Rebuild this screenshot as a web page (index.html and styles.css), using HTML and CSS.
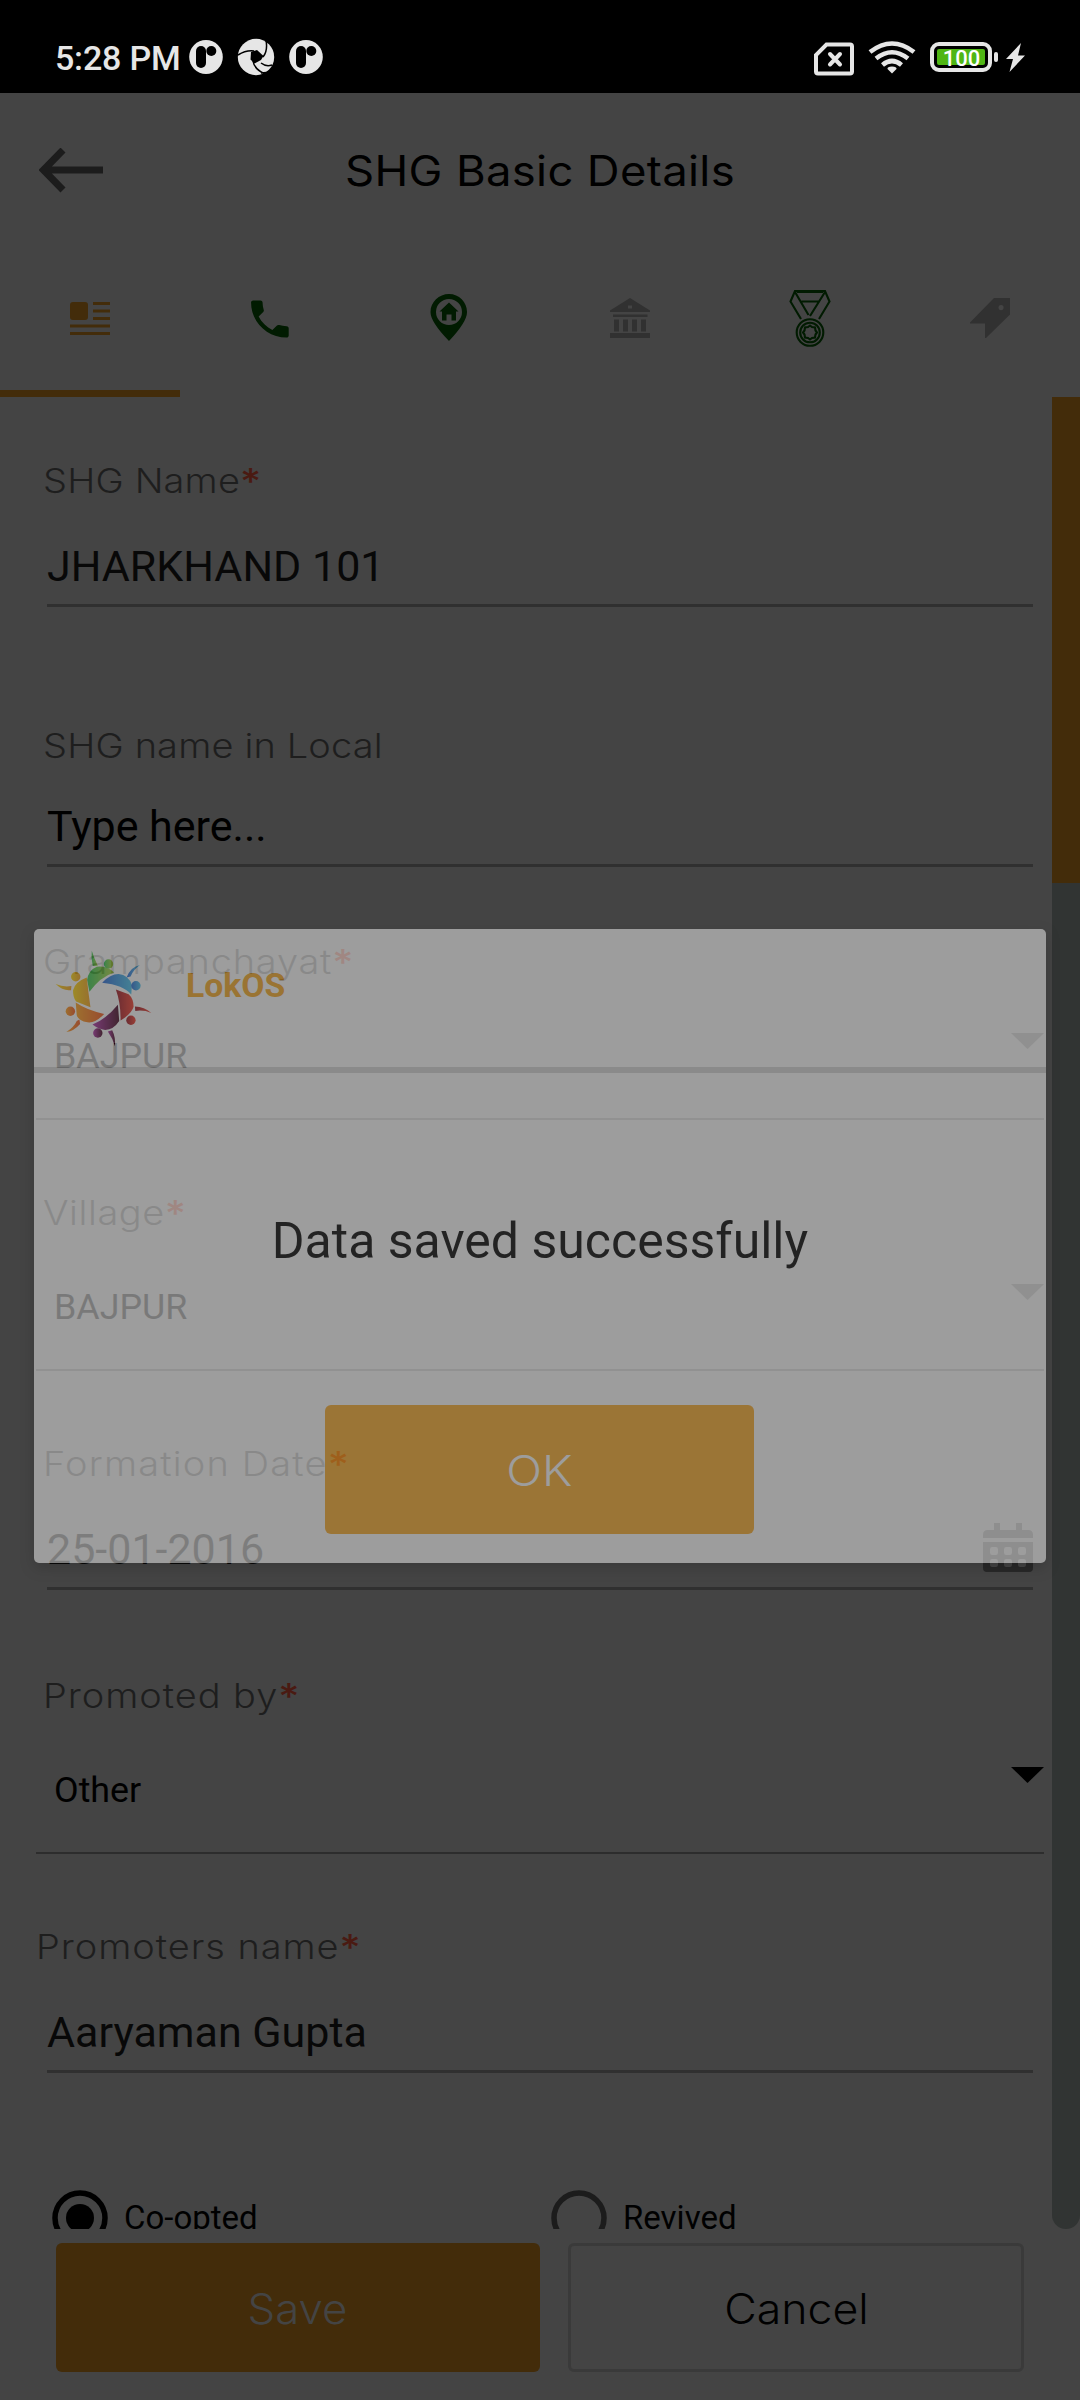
FILE: index.html
```html
<!DOCTYPE html>
<html lang="en">
<head>
<meta charset="utf-8">
<title>SHG Basic Details</title>
<link rel="stylesheet" href="styles.css">
</head>
<body>
<div class="phone">
  <div class="status">
    <span class="time">5:28 PM</span>
    <svg class="notes" width="136" height="40" viewBox="0 0 136 40">
      <g fill="#e6e6e6"><ellipse cx="17" cy="20" rx="16.8" ry="17"/><circle cx="67" cy="20" r="18.2"/><ellipse cx="117" cy="20" rx="16.8" ry="17"/></g>
      <g fill="#000"><rect x="7" y="9" width="10" height="22" rx="5"/><circle cx="22.300" cy="14" r="5"/><rect x="107" y="9" width="10" height="22" rx="5"/><circle cx="122.300" cy="14" r="5"/><path d="M62 15l6-2 6.500 6-2.500 4-6.500 3.500-4-4z"/></g>
      <g fill="none" stroke="#000" stroke-width="1.500"><path d="M49 18q8-5 16-4M77 3q2 11-3 17M83 28q-6 2-11-2M64 24q1 8 12 13M72 36q6 0 10-2"/></g>
    </svg>
    <svg class="system" width="214" height="40" viewBox="0 0 214 40">
      <path d="M12.500 7.500H36q2 0 2 2v25q0 2-2 2H4q-2 0-2-2V18z" fill="none" stroke="#e6e6e6" stroke-width="4"/>
      <path d="M16 17l10 10.500M26 17L16 27.500" stroke="#e6e6e6" stroke-width="4" stroke-linecap="round"/>
      <g fill="none" stroke="#e6e6e6" stroke-width="4.600"><path d="M56 15Q78 -2 100 15"/><path d="M62 21.500Q78 9 94 21.500"/><path d="M68.500 28Q78 20 87.500 28"/></g>
      <path d="M78 29.500q5 0 4.500 2.500L78 36.500 73.500 32q-.5-2.500 4.500-2.500z" fill="#e6e6e6"/>
      <rect x="118" y="7" width="58" height="26" rx="7" fill="none" stroke="#e6e6e6" stroke-width="4"/>
      <rect x="123" y="12" width="48" height="16" rx="2" fill="#4fb614"/>
      <rect x="180" y="15" width="4" height="10" rx="2" fill="#e6e6e6"/>
      <text x="147.500" y="29" class="charge">100</text>
      <path d="M207 6L192 22h7l-3.500 13L211 18.500h-7z" fill="#e6e6e6"/>
    </svg>
  </div>

  <header class="header">
    <svg class="back" width="66" height="46" viewBox="0 0 66 46"><path d="M64 22H6M24 2L4.500 22 24 42" fill="none" stroke="#1c1c1c" stroke-width="7"/></svg>
    <h1 class="title">SHG Basic Details</h1>
  </header>

  <nav class="tabs">
    <div class="tab tab-active"><svg class="icon" viewBox="0 0 60 60" fill="#432c0a"><rect x="10" y="14" width="18" height="18" rx="3"/><path d="M33 14h17v3H33zM33 21.500h17v3H33zM33 29h17v3H33zM10 36.500h40v3H10zM10 44h40v3H10z"/></svg></div>
    <div class="tab"><svg class="icon" viewBox="0 0 60 60" fill="#011b01"><path transform="translate(4.800 6.300) scale(2.090 2.060)" d="M6.620 10.790c1.440 2.830 3.760 5.140 6.590 6.590l2.200-2.200c.27-.27.67-.36 1.020-.24 1.120.37 2.330.57 3.570.57.55 0 1 .45 1 1V20c0 .55-.45 1-1 1-9.390 0-17-7.610-17-17 0-.55.45-1 1-1h3.500c.55 0 1 .45 1 1 0 1.250.2 2.450.57 3.570.11.35.03.74-.25 1.020l-2.200 2.200z"/></svg></div>
    <div class="tab"><svg class="icon" viewBox="0 0 60 60"><path fill="#011b01" fill-rule="evenodd" d="M29 6C39 6 47 14 47 24Q47 34 29 53Q10.500 34 10.500 24C10.500 14 19 6 29 6zM29 11A13 13 0 1 0 29 37A13 13 0 1 0 29 11z"/><path fill="#011b01" d="M29 14.500l9.500 9H36v9h-4.500v-6h-5v6H22v-9h-2.500z"/></svg></div>
    <div class="tab"><svg class="icon" viewBox="0 0 60 60" fill="#313131"><path fill-rule="evenodd" d="M30 10l20 12.500V24H10v-1.500zM28 17.500v3h4v-3zM13 26.500h34.500v2.500H13zM14 31.500h5v12h-5zM23 31.500h5v12h-5zM32 31.500h5v12h-5zM41 31.500h5v12h-5zM10 45h40v5H10z"/></svg></div>
    <div class="tab"><svg class="icon" viewBox="0 0 60 60" fill="none" stroke="#011b01" stroke-width="2.100"><path d="M21 31L10.500 13.500 15 3h30l4.500 10.500L39 31M15 4l13.500 23M45 4L30 28M21.500 13.500h17M17 4h26"/><circle cx="30" cy="44.500" r="13.300"/><circle cx="30" cy="44.500" r="9.800"/><path d="M30 37.500l2 1.500 3 .5.500 3 1.500 2-1.500 2-.5 3-3 .5-2 1.500-2-1.500-3-.5-.5-3-1.500-2 1.500-2 .5-3 3-.5z"/></svg></div>
    <div class="tab"><svg class="icon" viewBox="0 0 60 60" fill="#313131"><path fill-rule="evenodd" d="M34 10h16v16.500L26 50h-1V35.500H10V34.500zM41 17a2.600 2.600 0 1 0 .1 0z"/></svg></div>
  </nav>

  <main class="body">
    <form class="form">
      <div class="field first">
        <label class="label"><span class="w1">SHG Name</span><b class="star">*</b></label>
        <div class="input">JHARKHAND 101</div>
      </div>
      <div class="field second">
        <label class="label"><span class="w2">SHG name in Local</span></label>
        <div class="input hint">Type here...</div>
      </div>
      <div class="field third">
        <label class="label"><span class="w3">Grampanchayat</span><b class="star">*</b></label>
        <div class="select disabled"><span>BAJPUR</span><i class="caret"></i></div>
      </div>
      <div class="field">
        <label class="label"><span class="w4">Village</span><b class="star">*</b></label>
        <div class="select disabled"><span>BAJPUR</span><i class="caret"></i></div>
      </div>
      <div class="field">
        <label class="label"><span class="w5">Formation Date</span><b class="star">*</b></label>
        <div class="input date"><span>25-01-2016</span>
          <svg class="calendar" width="50" height="50" viewBox="0 0 50 50" fill="#282828"><path fill-rule="evenodd" d="M11 0h6v7h16V0h6v7h6q5 0 5 5v3H0v-3q0-5 5-5h6zM0 19h50v26q0 4-4 4H4q-4 0-4-4zM9 24q-2 0-2 2v4q0 2 2 2h4q2 0 2-2v-4q0-2-2-2zM23 24q-2 0-2 2v4q0 2 2 2h4q2 0 2-2v-4q0-2-2-2zM37 24q-2 0-2 2v4q0 2 2 2h4q2 0 2-2v-4q0-2-2-2zM9 36q-2 0-2 2v4q0 2 2 2h4q2 0 2-2v-4q0-2-2-2zM23 36q-2 0-2 2v4q0 2 2 2h4q2 0 2-2v-4q0-2-2-2zM37 36q-2 0-2 2v4q0 2 2 2h4q2 0 2-2v-4q0-2-2-2z"/></svg>
        </div>
      </div>
      <div class="field sixth">
        <label class="label"><span class="w6">Promoted by</span><b class="star">*</b></label>
        <div class="select"><span>Other</span><i class="caret"></i></div>
      </div>
      <div class="field">
        <label class="label outdent"><span class="w7">Promoters name</span><b class="star">*</b></label>
        <div class="input">Aaryaman Gupta</div>
      </div>
      <div class="radios">
        <div class="radio"><svg width="56" height="56" viewBox="0 0 56 56"><circle cx="28" cy="28" r="25" fill="none" stroke="#000" stroke-width="5.500"/><circle cx="28" cy="28" r="14" fill="#000"/></svg><span>Co-opted</span></div>
        <div class="radio"><svg width="56" height="56" viewBox="0 0 56 56"><circle cx="28" cy="28" r="25" fill="none" stroke="#1c1c1c" stroke-width="5.500"/></svg><span>Revived</span></div>
      </div>
    </form>
    <div class="track"><div class="thumb"></div></div>
  </main>

  <footer class="actions">
    <div class="button save"><span>Save</span></div>
    <div class="button cancel"><span>Cancel</span></div>
  </footer>

  <section class="dialog">
    <div class="dialog-head">
      <svg class="logo" width="97" height="97" viewBox="165 150 290 290">
        <defs>
          <linearGradient id="g"><stop offset="0" stop-color="#30c850"/><stop offset="1" stop-color="#b0d840"/></linearGradient>
          <linearGradient id="b"><stop offset="0" stop-color="#2868d8"/><stop offset="1" stop-color="#45c4ee"/></linearGradient>
          <linearGradient id="r"><stop offset="0" stop-color="#981420"/><stop offset="1" stop-color="#f83a28"/></linearGradient>
          <linearGradient id="p"><stop offset="0" stop-color="#b030a8"/><stop offset="1" stop-color="#40041c"/></linearGradient>
          <linearGradient id="o"><stop offset="0" stop-color="#ffa018"/><stop offset="1" stop-color="#f65418"/></linearGradient>
          <linearGradient id="y"><stop offset="0" stop-color="#ffd808"/><stop offset="1" stop-color="#f4a018"/></linearGradient>
        </defs>
        <g fill="url(#g)"><path d="M268 275L261 240Q265 210 290 200Q318 196 342 217Q300 230 268 275z"/><path d="M275 152Q282 175 293 197L278 198Q272 175 275 152z"/><circle cx="325" cy="192" r="14"/></g>
        <g fill="url(#b)"><path d="M306 248Q330 222 355 222Q385 225 395 255L393 283Q370 255 306 248z"/><path d="M419 195Q392 200 379 232L391 229Q400 208 419 195z"/><circle cx="407" cy="257" r="14"/></g>
        <g fill="url(#r)"><path d="M347 268L385 282Q400 295 400 320Q395 340 361 361Q362 310 347 268z"/><path d="M404 319L405 332Q430 328 453 338Q432 320 404 319z"/><circle cx="392" cy="360" r="14"/></g>
        <g fill="url(#p)"><path d="M353 314L357 362Q340 388 315 389Q295 387 277 373Q320 355 353 314z"/><path d="M323 394L336 390Q347 412 344 438Q338 415 323 394z"/><circle cx="293" cy="398" r="14"/></g>
        <g fill="url(#o)"><path d="M227 307Q260 330 312 341Q285 370 262 366Q235 362 230 345z"/><path d="M238 358L240 371Q222 392 199 395Q222 380 230 362z"/><circle cx="211" cy="333" r="14"/></g>
        <g fill="url(#y)"><path d="M260 232Q265 280 271 321L228 304Q218 290 219 270Q225 245 260 232z"/><path d="M214 258L213 270Q190 274 167 252Q190 262 214 258z"/><circle cx="227" cy="230" r="14"/></g>
      </svg>
      <strong class="brand">LokOS</strong>
    </div>
    <p class="message">Data saved successfully</p>
    <div class="button ok"><span>OK</span></div>
  </section>
</div>
</body>
</html>
```
FILE: styles.css
```css
* { box-sizing: border-box; }
body { margin: 0; background: #444; }
svg { display: block; flex: none; }

.phone {
  position: relative;
  width: 1080px;
  height: 2400px;
  display: flex;
  flex-direction: column;
  overflow: hidden;
  background: #444;
  color: #000;
  font-family: Roboto, "Liberation Sans", sans-serif;
}

.status {
  height: 93px;
  padding: 37px 52px 0 55px;
  display: flex;
  background: #000;
}
.time {
  width: 134px;
  line-height: 42px;
  font-size: 34px;
  font-weight: 500;
  letter-spacing: -0.200px;
  color: #e6e6e6;
  white-space: nowrap;
}
.system { margin-left: auto; }
.charge { font-size: 22px; font-weight: 500; fill: #fff; text-anchor: middle; }

.header {
  height: 153px;
  padding: 2px 39px 0;
  display: grid;
  grid-template-columns: 66px 1fr 66px;
  align-items: center;
}
.title {
  margin: 0;
  font: 400 41.700px/60px Inter, sans-serif;
  text-align: center;
  white-space: nowrap;
  letter-spacing: 0.300px;
  transform: scaleX(1.090);
}

.tabs { height: 151px; display: flex; }
.tab {
  flex: 1;
  padding-top: 42px;
  display: flex;
  justify-content: center;
  align-items: flex-start;
}
.tab-active { border-bottom: 7px solid #432c0a; }
.icon { width: 60px; height: 60px; }

.body { height: 1832px; display: flex; overflow: hidden; }
.form { flex: 1; height: 1832px; overflow: hidden; }
.track { width: 28px; background: #313433; border-radius: 0 0 14px 14px; }
.thumb { height: 486px; background: #432c0a; }

.field { padding: 71px 8px 0 36px; }
.first { padding-top: 62px; }
.second { padding-top: 117px; }
.third { padding-top: 73px; }
.sixth { padding-top: 84px; }

.label {
  display: flex;
  width: max-content;
  height: 44px;
  margin-left: 6.500px;
  font: 300 33.600px/44px Inter, sans-serif;
  color: #1e1e1e;
  white-space: nowrap;
  transform: scaleX(1.130);
  transform-origin: left;
}
.outdent { margin-left: 0; }
.star { font-size: 36px; font-weight: 500; color: #4a1a12; }
.w1 { letter-spacing: 0.150px; }
.w2 { letter-spacing: 0.150px; }
.w3 { letter-spacing: 0.700px; }
.w4 { letter-spacing: 0.500px; }
.w5 { letter-spacing: 1.050px; }
.w6 { letter-spacing: 0.850px; }
.w7 { letter-spacing: 0.850px; }

.input {
  height: 67px;
  margin: 37px 11px 0;
  border-bottom: 3px solid #303030;
  font-size: 43px;
  line-height: 52px;
  color: #080808;
  white-space: nowrap;
}
.hint { margin-top: 32px; color: #000; }
.date { display: flex; justify-content: space-between; }

.select {
  height: 87px;
  margin-top: 49px;
  padding: 1px 0 0 18px;
  display: flex;
  justify-content: space-between;
  border-bottom: 2px solid #2d2d2d;
  font-size: 35.800px;
  line-height: 44px;
}
.caret {
  width: 33px;
  height: 16px;
  margin-top: -1px;
  background: #000;
  clip-path: polygon(0 0, 100% 0, 50% 100%);
}
.disabled .caret { background: #2c2c2c; }

.radios { padding: 115px 0 0 52px; display: grid; grid-template-columns: 499px 1fr; }
.radio { display: flex; align-items: center; gap: 16px; font-size: 33px; line-height: 60px; height: 60px; }

.actions { height: 171px; padding: 14px 56px 28px; display: flex; gap: 28px; }
.button {
  display: flex;
  align-items: center;
  justify-content: center;
  height: 129px;
  padding-top: 2px;
  border-radius: 6px;
  font: 300 41.700px/60px Inter, sans-serif;
}
.save { width: 484px; background: #432c0a; color: #444; }
.save span { transform: scaleX(1.050); }
.cancel { width: 456px; border: 3px solid #3a3a3a; }
.cancel span { transform: scaleX(1.070); }

.dialog {
  position: absolute;
  left: 34px;
  top: 929px;
  width: 1012px;
  height: 634px;
  display: flex;
  flex-direction: column;
  align-items: center;
  background: #fff;
  border-radius: 5px;
  box-shadow: 0 5px 14px rgba(0, 0, 0, .3);
  opacity: .476;
}
.dialog-head {
  align-self: stretch;
  height: 144px;
  padding: 21px 21px 0;
  display: flex;
  border-bottom: 6px solid #d8d8d8;
}
.brand { margin: 15px 0 0 34px; font-size: 33.700px; line-height: 42px; color: #faa922; }
.message { margin: 138px 0 0; font-size: 50px; line-height: 60px; white-space: nowrap; }
.ok { width: 429px; margin: 134px 2px 0 0; background: #fcac28; color: #fff; }
.ok span { transform: scaleX(1.130); }
```
